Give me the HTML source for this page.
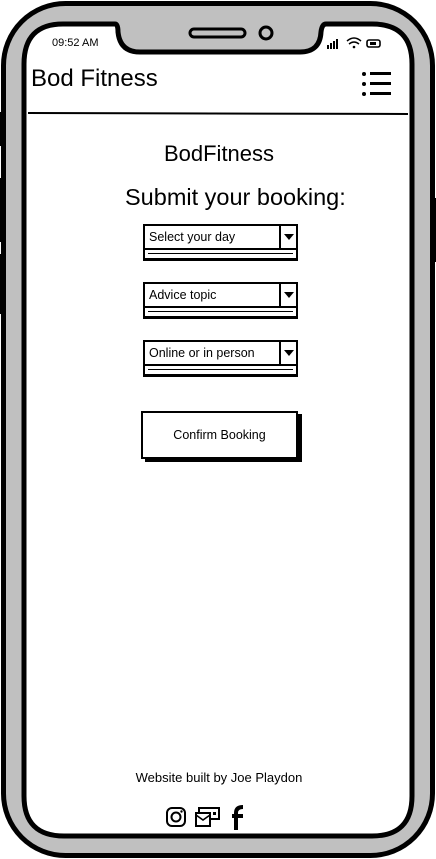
<!DOCTYPE html>
<html><head><style>
body{margin:0;width:436px;height:859px;overflow:hidden;background:#fff;font-family:"Liberation Sans",sans-serif;position:relative}
.a{position:absolute}
.dd{position:absolute;left:143px;width:153px;height:36px}
.dd .t{position:absolute;left:0;top:0;height:22px;border:2px solid #000;border-right:none;font-size:12.5px;line-height:22px;padding-left:4px;width:132px}
.dd .ar{position:absolute;left:136px;top:0;width:15px;height:22px;border:2px solid #000}
.dd .ar:after{content:"";position:absolute;left:3px;top:8px;border-left:5px solid transparent;border-right:5px solid transparent;border-top:6px solid #000}
.dd .u{position:absolute;left:0;top:26px;width:151px;height:8px;border:2px solid #000;border-top:none;border-bottom-width:3px}
.dd .u:after{content:"";position:absolute;left:3px;right:3px;top:3px;height:1px;background:#000}
</style></head><body>
<svg class="a" style="left:0;top:0" width="436" height="859">
<rect x="0" y="112" width="5" height="34" fill="#000"/>
<rect x="0" y="178" width="5" height="64" fill="#000"/>
<rect x="0" y="254" width="5" height="60" fill="#000"/>
<rect x="431" y="198" width="5" height="64" fill="#000"/>
<rect x="3.5" y="3.5" width="429" height="852" rx="62" fill="#c0c0c0" stroke="#000" stroke-width="5"/>
<path d="M63,24 H115 Q118,24 118,32 Q120,52 140,52 H300 Q320,52 321,32 Q322,24 326,24 H372 Q412,24 412,64 V796 Q412,836 372,836 H64 Q24,836 24,796 V64 Q24,24 63,24 Z" fill="#fff" stroke="#000" stroke-width="5"/>
<rect x="190" y="29" width="55" height="8" rx="4" fill="none" stroke="#000" stroke-width="3"/>
<ellipse cx="266" cy="33" rx="6" ry="6" fill="none" stroke="#000" stroke-width="3"/>
<g fill="#000"><rect x="327" y="45" width="2" height="4"/><rect x="330" y="43" width="2" height="6"/><rect x="333" y="41" width="2" height="8"/><rect x="336" y="39" width="2" height="10"/></g>
<path d="M347,41 Q354,35 361,41 M349,44 Q354,40 359,44" fill="none" stroke="#000" stroke-width="1.5"/><circle cx="354" cy="47" r="1.3"/>
<rect x="367" y="40" width="13" height="7" rx="2" fill="none" stroke="#000" stroke-width="1.6"/><rect x="370" y="42" width="6" height="3"/>
<line x1="28" y1="113" x2="408" y2="114" stroke="#000" stroke-width="2"/>
<g fill="#000"><circle cx="364" cy="74" r="2"/><circle cx="364" cy="84" r="2"/><circle cx="364" cy="94" r="2"/>
<rect x="370" y="72" width="21" height="3"/><rect x="370" y="82" width="21" height="3"/><rect x="370" y="92" width="21" height="3"/></g>
<rect x="167" y="808" width="18" height="18" rx="5" fill="none" stroke="#000" stroke-width="2"/><circle cx="176" cy="817" r="4.5" fill="none" stroke="#000" stroke-width="2"/><circle cx="181.5" cy="811.5" r="1.2"/>
<rect x="196" y="813" width="14" height="13" fill="none" stroke="#000" stroke-width="2"/><path d="M196,815 L203,820 L210,815" fill="none" stroke="#000" stroke-width="1.6"/><path d="M199,813 V808 H219 V819 H210" fill="none" stroke="#000" stroke-width="2"/><rect x="213" y="812" width="3" height="3"/>
<path d="M236,830 V813 Q236,807 243,807 M232,816 H243" fill="none" stroke="#000" stroke-width="4"/>
</svg>
<div class="a" style="left:52px;top:37px;font-size:11px">09:52 AM</div>
<div class="a" style="left:31px;top:65px;font-size:24px">Bod Fitness</div>
<div class="a" style="left:0;width:436px;text-align:center;top:141px;font-size:22px;padding-left:1px">BodFitness</div>
<div class="a" style="left:125px;top:184px;font-size:23.5px">Submit your booking:</div>
<div class="dd" style="top:224px"><div class="t">Select your day</div><div class="ar"></div><div class="u"></div></div>
<div class="dd" style="top:282px"><div class="t">Advice topic</div><div class="ar"></div><div class="u"></div></div>
<div class="dd" style="top:340px"><div class="t">Online or in person</div><div class="ar"></div><div class="u"></div></div>
<div class="a" style="left:141px;top:411px;width:153px;height:44px;border:2px solid #000;box-shadow:4px 3px 0 #000;font-size:12.5px;line-height:44px;text-align:center">Confirm Booking</div>
<div class="a" style="left:0;width:436px;text-align:center;top:770px;font-size:13px;padding-left:1px">Website built by Joe Playdon</div>
</body></html>
